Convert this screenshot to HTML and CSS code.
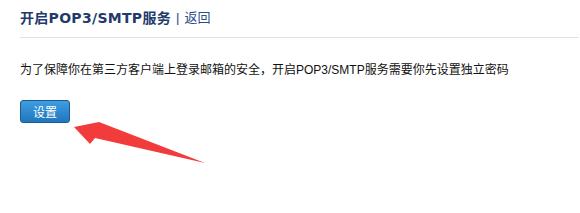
FILE: index.html
```html
<!DOCTYPE html>
<html lang="zh">
<head>
  <meta charset="UTF-8" />
  <title>开启POP3/SMTP服务</title>
  <link rel="stylesheet" href="styles.css">
</head>
<body>
  <div class="page">
    <div class="header">
      <span class="title">开启POP3/SMTP服务</span>
      <span class="sep">|</span>
      <a class="back" href="#">返回</a>
    </div>
    <p class="tip">为了保障你在第三方客户端上登录邮箱的安全，开启POP3/SMTP服务需要你先设置独立密码</p>
    <button class="btn">设置</button>
  </div>
  <svg class="arrow" viewBox="0 0 580 213" width="580" height="213">
    <polygon points="74,127 99,122 205,163 95,138 90,144" fill="#f23b3b"/>
  </svg>
</body>
</html>
```
FILE: styles.css
```css
* {
  margin: 0;
  padding: 0;
  box-sizing: border-box;
}
body {
  background: #ffffff;
  font-family: "Liberation Sans", "Noto Sans CJK SC", sans-serif;
  width: 580px;
  height: 213px;
  overflow: hidden;
  position: relative;
}
.page {
  padding-left: 20px;
  padding-right: 1px;
}
.header {
  display: flex;
  align-items: center;
  gap: 5px;
  padding-top: 8px;
  height: 38px;
  line-height: 20px;
  border-bottom: 1px solid #e2e2e2;
  align-content: flex-start;
  align-items: flex-start;
}
.title {
  font-family: "DejaVu Sans", "Noto Sans CJK SC", sans-serif;
  font-size: 14px;
  font-weight: bold;
  letter-spacing: 0.3px;
  color: #1f3b6b;
}
.sep {
  font-size: 13px;
  color: #2a4a80;
}
.back {
  font-size: 13px;
  color: #2a4d87;
  text-decoration: none;
}
.tip {
  margin-top: 22px;
  font-size: 12px;
  line-height: 20px;
  color: #111;
}
.btn {
  margin-top: 20px;
  width: 50px;
  height: 23px;
  border: 1px solid #1b5d93;
  border-radius: 3px;
  background: linear-gradient(#3f9de0, #1f77bd);
  color: #ffffff;
  font-size: 12px;
  font-family: "Liberation Sans", "Noto Sans CJK SC", sans-serif;
  cursor: pointer;
}
.arrow {
  position: absolute;
  top: 0;
  left: 0;
  pointer-events: none;
}
```
